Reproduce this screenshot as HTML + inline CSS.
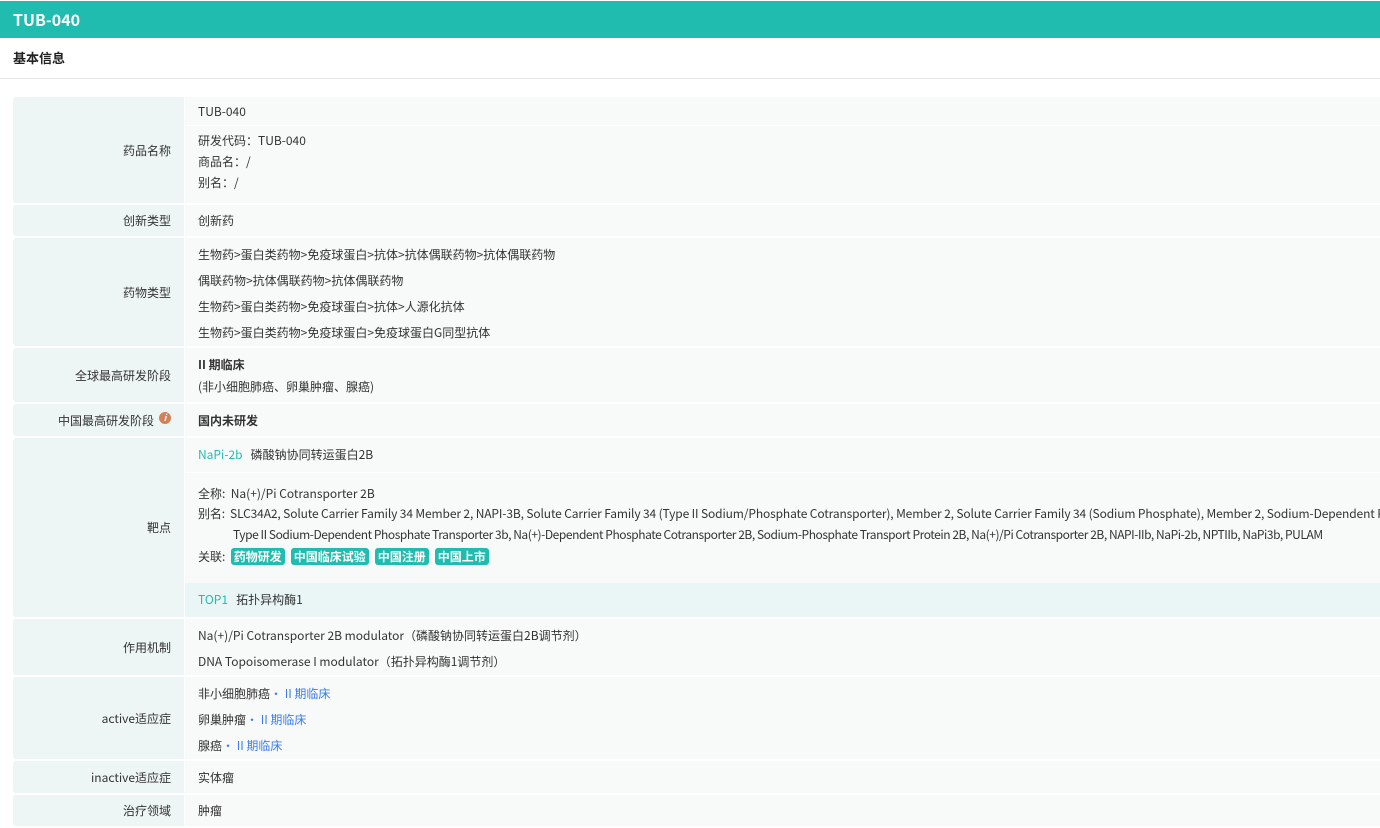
<!DOCTYPE html>
<html><head><meta charset="utf-8"><style>
*{margin:0;padding:0;box-sizing:border-box}
body{width:1380px;height:828px;overflow:hidden;background:#fff;font-family:"Noto Sans CJK SC","Liberation Sans",sans-serif;font-size:12px;color:#333;position:relative}
.hd{position:absolute;left:0;top:1px;width:1380px;height:37px;background:#20bcaf;color:#fff;font-weight:bold;font-size:16px;line-height:37px;padding-left:13px}
.sec{position:absolute;left:0;top:38px;width:1380px;height:41px;border-bottom:1px solid #e6e8e8;font-weight:bold;font-size:13px;line-height:40px;padding-left:13px;color:#222}
.l{position:absolute;left:13px;width:171px;background:#eef5f5;text-align:right;padding-right:13px;color:#333;border-radius:3px 0 0 3px;display:flex;align-items:center;justify-content:flex-end}
.v{position:absolute;left:185px;width:1195px;background:#f8fafa}
.t{position:absolute;left:198px;white-space:nowrap;line-height:16px}
.b{font-weight:bold}
.c{color:#20bcaf}
.bl{color:#3b7cf0}
.n{letter-spacing:-0.13px}
.tag{display:inline-block;background:#20bcaf;color:#fff;border-radius:3px;padding:0 3px;line-height:17px;margin-right:6px;font-weight:bold}
.ic{display:inline-block;width:12px;height:12px;border-radius:50%;background:#d5805a;color:#fff;font-size:9px;line-height:12px;text-align:center;font-style:italic;font-weight:bold;margin-left:5px;margin-top:-4px}
</style></head><body>
<div class="hd">TUB-040</div>
<div class="sec">基本信息</div>

<div class="l" style="top:97px;height:106px">药品名称</div>
<div class="v" style="top:97px;height:28px"></div>
<div class="v" style="top:126px;height:77px"></div>
<div class="t" style="top:104px">TUB-040</div>
<div class="t" style="top:133px">研发代码：TUB-040</div>
<div class="t" style="top:154px">商品名：/</div>
<div class="t" style="top:175px">别名：/</div>

<div class="l" style="top:205px;height:31px">创新类型</div>
<div class="v" style="top:205px;height:31px"></div>
<div class="t" style="top:213px">创新药</div>

<div class="l" style="top:238px;height:108px">药物类型</div>
<div class="v" style="top:238px;height:108px"></div>
<div class="t" style="top:247px">生物药&gt;蛋白类药物&gt;免疫球蛋白&gt;抗体&gt;抗体偶联药物&gt;抗体偶联药物</div>
<div class="t" style="top:273px">偶联药物&gt;抗体偶联药物&gt;抗体偶联药物</div>
<div class="t" style="top:299px">生物药&gt;蛋白类药物&gt;免疫球蛋白&gt;抗体&gt;人源化抗体</div>
<div class="t" style="top:325px">生物药&gt;蛋白类药物&gt;免疫球蛋白&gt;免疫球蛋白G同型抗体</div>

<div class="l" style="top:348px;height:54px">全球最高研发阶段</div>
<div class="v" style="top:348px;height:54px"></div>
<div class="t b" style="top:357px">II 期临床</div>
<div class="t" style="top:379px">(非小细胞肺癌、卵巢肿瘤、腺癌)</div>

<div class="l" style="top:404px;height:32px">中国最高研发阶段<span class="ic">i</span></div>
<div class="v" style="top:404px;height:32px"></div>
<div class="t b" style="top:413px">国内未研发</div>

<div class="l" style="top:438px;height:179px">靶点</div>
<div class="v" style="top:438px;height:34px"></div>
<div class="v" style="top:473px;height:110px"></div>
<div class="v" style="top:583px;height:34px;background:#eaf6f6"></div>
<div class="t" style="top:447px"><span class="c">NaPi-2b</span>&nbsp;&nbsp;&nbsp;磷酸钠协同转运蛋白2B</div>
<div class="t" style="top:486px">全称:&nbsp;&nbsp;Na(+)/Pi Cotransporter 2B</div>
<div class="t n" style="top:506px">别名:&nbsp;&nbsp;SLC34A2, Solute Carrier Family 34 Member 2, NAPI-3B, Solute Carrier Family 34 (Type II Sodium/Phosphate Cotransporter), Member 2, Solute Carrier Family 34 (Sodium Phosphate), Member 2, Sodium-Dependent Phosphate</div>
<div class="t" style="top:527px;left:233px;letter-spacing:-0.45px">Type II Sodium-Dependent Phosphate Transporter 3b, Na(+)-Dependent Phosphate Cotransporter 2B, Sodium-Phosphate Transport Protein 2B, Na(+)/Pi Cotransporter 2B, NAPI-IIb, NaPi-2b, NPTIIb, NaPi3b, PULAM</div>
<div class="t" style="top:548px">关联:&nbsp;&nbsp;<span class="tag">药物研发</span><span class="tag">中国临床试验</span><span class="tag">中国注册</span><span class="tag">中国上市</span></div>
<div class="t" style="top:592px"><span class="c">TOP1</span>&nbsp;&nbsp;&nbsp;拓扑异构酶1</div>

<div class="l" style="top:619px;height:56px">作用机制</div>
<div class="v" style="top:619px;height:56px"></div>
<div class="t" style="top:628px">Na(+)/Pi Cotransporter 2B modulator（磷酸钠协同转运蛋白2B调节剂）</div>
<div class="t" style="top:654px">DNA Topoisomerase I modulator（拓扑异构酶1调节剂）</div>

<div class="l" style="top:677px;height:82px">active适应症</div>
<div class="v" style="top:677px;height:82px"></div>
<div class="t" style="top:686px">非小细胞肺癌<span class="bl">• II 期临床</span></div>
<div class="t" style="top:712px">卵巢肿瘤<span class="bl">• II 期临床</span></div>
<div class="t" style="top:738px">腺癌<span class="bl">• II 期临床</span></div>

<div class="l" style="top:761px;height:32px">inactive适应症</div>
<div class="v" style="top:761px;height:32px"></div>
<div class="t" style="top:770px">实体瘤</div>

<div class="l" style="top:795px;height:31px">治疗领域</div>
<div class="v" style="top:795px;height:31px"></div>
<div class="t" style="top:803px">肿瘤</div>
</body></html>
